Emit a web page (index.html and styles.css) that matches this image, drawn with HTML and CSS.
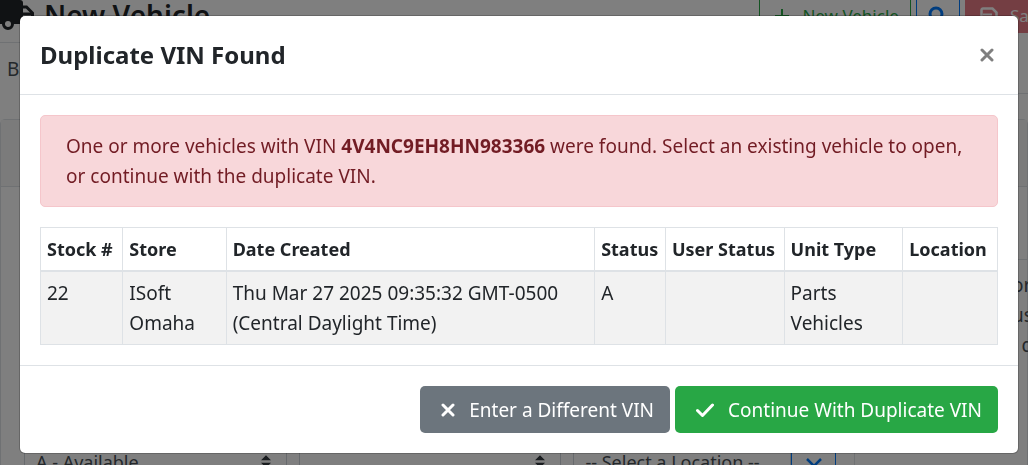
FILE: index.html
```html
<!DOCTYPE html>
<html lang="en">
<head>
  <meta charset="UTF-8">
  <meta name="viewport" content="width=device-width, initial-scale=1.0">
  <title>New Vehicle</title>
  <link rel="stylesheet" href="styles.css">
</head>
<body>
  <div class="page" inert>
    <header class="page-header">
      <svg class="truck" viewBox="0 0 34 32" width="34" height="32" aria-hidden="true">
        <path d="M0 0h20a3 3 0 0 1 3 3v21H0z" fill="#212529"/>
        <path d="M22 7h4.500l6 6v11" fill="none" stroke="#212529" stroke-width="3"/>
        <path d="M22 14h11" stroke="#212529" stroke-width="3"/>
        <circle cx="8" cy="24" r="4.500" fill="#fff" stroke="#212529" stroke-width="3"/>
      </svg>
      <h1>New Vehicle</h1>
      <div class="actions">
        <button class="btn btn-outline-success">
          <svg viewBox="0 0 16 16" width="16" height="16" aria-hidden="true"><path d="M8 1v14M1 8h14" stroke="currentColor" stroke-width="2"/></svg>
          New Vehicle
        </button>
        <button class="btn btn-search" aria-label="Search">
          <svg viewBox="0 0 20 20" width="20" height="20" aria-hidden="true"><circle cx="8" cy="8" r="6" fill="none" stroke="currentColor" stroke-width="3"/><path d="M12 12l6 6" stroke="currentColor" stroke-width="3"/></svg>
        </button>
        <button class="btn btn-save">
          <svg viewBox="0 0 18 18" width="18" height="18" aria-hidden="true"><path d="M3 1.500h9.500l4 4V15a1.500 1.500 0 0 1-1.500 1.500H3A1.500 1.500 0 0 1 1.500 15V3A1.500 1.500 0 0 1 3 1.500z" fill="none" stroke="currentColor" stroke-width="2.500"/><path d="M3 7.500h9" stroke="currentColor" stroke-width="2"/><circle cx="9" cy="11.500" r="2.500" fill="currentColor"/></svg>
          Save
        </button>
      </div>
    </header>
    <nav class="tabs"><a class="tab" href="#">Ba</a></nav>
    <section class="card">
      <div class="card-header"></div>
      <div class="card-body">
        <form class="fields">
          <select class="custom-select" aria-label="Status"><option>A - Available</option></select>
          <select class="custom-select" aria-label="User status"><option></option></select>
          <div class="input-group">
            <select class="custom-select plain" aria-label="Location"><option>-- Select a Location --</option></select>
            <button type="button" class="btn-down" aria-label="Show locations">
              <svg viewBox="0 0 18 12" width="18" height="12" aria-hidden="true"><path d="M2 2l7 7 7-7" fill="none" stroke="currentColor" stroke-width="2.500"/></svg>
            </button>
          </div>
        </form>
        <aside class="notes">or<br>us<br>&ensp;d</aside>
      </div>
    </section>
  </div>

  <div class="backdrop">
    <div class="modal" role="dialog" aria-modal="true" aria-labelledby="modal-title">
      <div class="modal-header">
        <h2 id="modal-title">Duplicate VIN Found</h2>
        <button class="close" aria-label="Close">
          <svg viewBox="0 0 14 14" width="14" height="14" aria-hidden="true"><path d="M2 2l10 10M12 2L2 12" stroke="currentColor" stroke-width="3" stroke-linecap="round"/></svg>
        </button>
      </div>
      <div class="modal-body">
        <div class="alert" role="alert">
          One or more vehicles with VIN <strong>4V4NC9EH8HN983366</strong> were found. Select an existing vehicle to open, or continue with the duplicate VIN.
        </div>
        <table class="table">
          <thead>
            <tr>
              <th class="col-stock">Stock #</th>
              <th class="col-store">Store</th>
              <th>Date Created</th>
              <th class="col-status">Status</th>
              <th class="col-wide">User Status</th>
              <th class="col-wide">Unit Type</th>
              <th class="col-location">Location</th>
            </tr>
          </thead>
          <tbody>
            <tr>
              <td>22</td>
              <td>ISoft Omaha</td>
              <td>Thu Mar 27 2025 09:35:32 GMT-0500 (Central Daylight Time)</td>
              <td>A</td>
              <td></td>
              <td>Parts Vehicles</td>
              <td></td>
            </tr>
          </tbody>
        </table>
      </div>
      <div class="modal-footer">
        <button class="btn btn-secondary">
          <svg viewBox="0 0 14 14" width="14" height="14" aria-hidden="true"><path d="M2 2l10 10M12 2L2 12" stroke="currentColor" stroke-width="3" stroke-linecap="round"/></svg>
          Enter a Different VIN
        </button>
        <button class="btn btn-success">
          <svg viewBox="0 0 18 14" width="18" height="14" aria-hidden="true"><path d="M1.500 7.500l5 5L16.500 2" fill="none" stroke="currentColor" stroke-width="3" stroke-linecap="round" stroke-linejoin="round"/></svg>
          Continue With Duplicate VIN
        </button>
      </div>
    </div>
  </div>
</body>
</html>
```
FILE: styles.css
```css
:root {
  --dark: #212529;
  --line: #dee2e6;
  --green: #28a745;
}
* {
  box-sizing: border-box;
}
body {
  margin: 0;
  height: 100vh;
  overflow: hidden;
  font-family: "Segoe UI", "Noto Sans", "Open Sans", sans-serif;
  font-size: 19px;
  line-height: 30px;
  color: var(--dark);
  background: #fff;
}
h1, h2 {
  margin: 0;
  font-weight: 600;
}
button, select {
  font: inherit;
}

/* page behind the dialog */
.page {
  height: 100vh;
  overflow: hidden;
}
.page-header {
  display: flex;
  align-items: flex-start;
  height: 42px;
}
.truck {
  flex: none;
}
.page-header h1 {
  padding-left: 10px;
  font-size: 28px;
  white-space: nowrap;
}
.actions {
  display: flex;
  gap: 5px;
  margin-left: auto;
  margin-right: -31px;
  margin-top: -14px;
}
.btn {
  display: flex;
  align-items: center;
  gap: 14px;
  height: 47px;
  padding: 0 15px;
  border: 1px solid transparent;
  border-radius: 5px;
  white-space: nowrap;
  cursor: pointer;
}
.actions .btn {
  gap: 12px;
  padding: 12px 11px 0;
  font-size: 17px;
}
.actions .btn-outline-success {
  padding-left: 14px;
  color: var(--green);
  border-color: var(--green);
  background: #fff;
}
.btn-search {
  color: #007bff;
  border-color: #007bff;
  background: #fff;
}
.actions .btn-save {
  padding-left: 14px;
  color: #fff;
  background: #e87c87;
}
.tabs {
  display: flex;
  height: 52px;
  border-bottom: 1px solid var(--line);
}
.tab {
  width: 120px;
  height: 52px;
  padding: 11px 7px;
  color: #495057;
  background: #fff;
  border-top: 1px solid var(--line);
  text-decoration: none;
}
.card {
  margin-top: 25px;
  border: 1px solid var(--line);
  border-radius: 5px;
}
.card-header {
  height: 67px;
  background: #f7f7f7;
  border-bottom: 1px solid var(--line);
}
.card-body {
  display: grid;
  grid-template-columns: minmax(0, 832fr) minmax(0, 157fr) minmax(0, 15fr);
  padding-left: 23px;
}
.fields {
  display: grid;
  grid-template-columns: repeat(3, minmax(0, 1fr));
  gap: 12px;
  padding: 251px 18px 20px 0;
  border-right: 1px solid var(--line);
}
.notes {
  grid-column: 3;
  margin-top: 72px;
  padding-top: 10px;
  border-top: 1px solid var(--line);
  color: #495057;
  white-space: nowrap;
}
.custom-select {
  width: 100%;
  min-width: 0;
  height: 47px;
  padding: 0 11px;
  appearance: none;
  color: #495057;
  font-size: 18px;
  border: 1px solid #ced4da;
  border-radius: 5px;
  background: #fff url("data:image/svg+xml,%3Csvg xmlns='http://www.w3.org/2000/svg' viewBox='0 0 4 5'%3E%3Cpath fill='%23343a40' d='M2 0L0 2h4zm0 5L0 3h4z'/%3E%3C/svg%3E") no-repeat right 15px center / 10px 13px;
}
.plain {
  background-image: none;
  border-radius: 5px 0 0 5px;
}
.input-group {
  display: flex;
}
.btn-down {
  flex: none;
  width: 45px;
  height: 47px;
  color: #007bff;
  background: #fff;
  border: 1px solid #007bff;
  border-radius: 0 5px 5px 0;
}

/* dialog */
.backdrop {
  position: fixed;
  inset: 0;
  padding: 15px 9px 11px 19px;
  background: rgba(0, 0, 0, 0.5);
}
.modal {
  background: #fff;
  background-clip: padding-box;
  border: 1px solid rgba(0, 0, 0, 0.2);
  border-radius: 6px;
}
.modal-header {
  display: flex;
  justify-content: space-between;
  align-items: center;
  padding: 20px;
  border-bottom: 1px solid var(--line);
}
.modal-header h2 {
  font-size: 24px;
  font-weight: 700;
  line-height: 38px;
}
.close {
  display: flex;
  padding: 4px;
  color: #7f7f7f;
  background: none;
  border: 0;
  cursor: pointer;
}
.modal-body {
  padding: 20px;
}
.alert {
  margin-bottom: 20px;
  padding: 15px 25px;
  color: #721c24;
  background: #f8d7da;
  border: 1px solid #f5c6cb;
  border-radius: 5px;
}
.table {
  width: 100%;
  table-layout: fixed;
  border-collapse: collapse;
}
.table th,
.table td {
  padding: 6px;
  border: 1px solid var(--line);
  text-align: left;
  vertical-align: top;
}
.table th {
  border-bottom-width: 2px;
  font-size: 18px;
  font-weight: 700;
  white-space: nowrap;
}
.table tbody tr {
  background: #f2f2f2;
}
.col-stock {
  width: 8.6%;
}
.col-store {
  width: 10.8%;
}
.col-status {
  width: 7.4%;
}
.col-wide {
  width: 12.4%;
}
.col-location {
  width: 9.9%;
}
.modal-footer {
  display: flex;
  justify-content: flex-end;
  gap: 5px;
  padding: 20px;
  border-top: 1px solid var(--line);
}
.modal-footer .btn {
  padding-left: 20px;
  color: #fff;
}
.btn-secondary {
  background: #6c757d;
}
.btn-success {
  background: var(--green);
}
```
